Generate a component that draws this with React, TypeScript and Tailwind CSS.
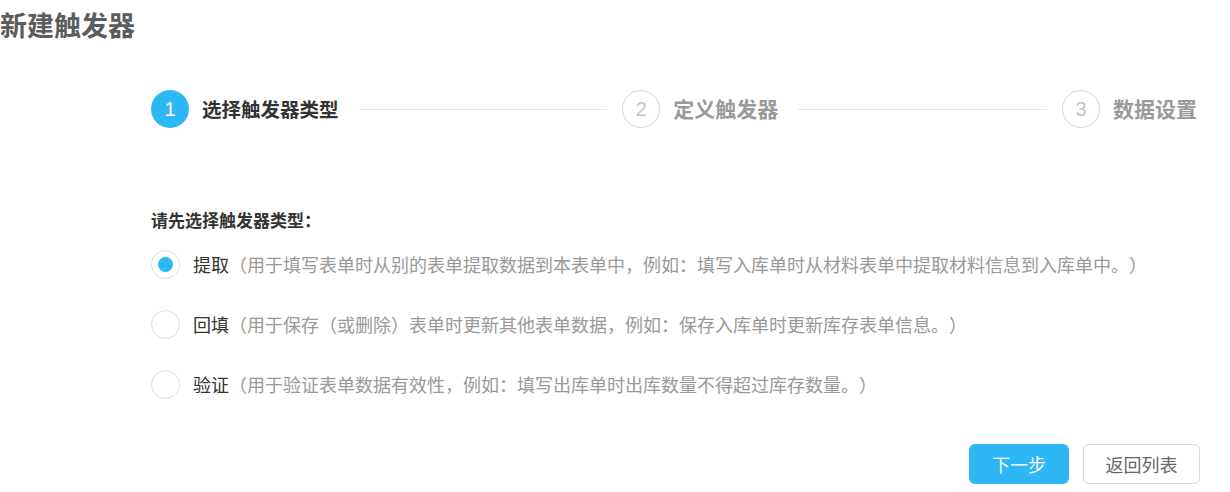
import { Fragment } from "react";

const FONT = "font-['Noto_Sans_CJK_SC','Noto_Sans',sans-serif] [text-spacing-trim:space-all]";

type Step = { n: number; label: string; active?: boolean };

const steps: Step[] = [
  { n: 1, label: "选择触发器类型", active: true },
  { n: 2, label: "定义触发器" },
  { n: 3, label: "数据设置" },
];

const options = [
  {
    name: "提取",
    desc: "（用于填写表单时从别的表单提取数据到本表单中，例如：填写入库单时从材料表单中提取材料信息到入库单中。）",
    checked: true,
  },
  {
    name: "回填",
    desc: "（用于保存（或删除）表单时更新其他表单数据，例如：保存入库单时更新库存表单信息。）",
  },
  {
    name: "验证",
    desc: "（用于验证表单数据有效性，例如：填写出库单时出库数量不得超过库存数量。）",
  },
];

function StepItem({ step }: { step: Step }) {
  return (
    <div className="flex items-center gap-[13px] shrink-0">
      <div
        className={
          step.active
            ? "w-[38px] h-[38px] rounded-full bg-[#2db7f5] text-white flex items-center justify-center text-[20px] font-['Liberation_Sans',sans-serif]"
            : "w-[38px] h-[38px] rounded-full border border-[#d4d4d4] bg-white text-[#c4c4c4] flex items-center justify-center text-[20px] font-['Liberation_Sans',sans-serif]"
        }
      >
        {step.n}
      </div>
      <span
        className={
          step.active
            ? "text-[19.5px] font-bold text-[#333]"
            : "text-[21px] font-bold text-[#999]"
        }
      >
        {step.label}
      </span>
    </div>
  );
}

export default function App() {
  return (
    <div className={`w-[1230px] h-[492px] bg-white overflow-hidden ${FONT}`}>
      <h1 className="pt-[7px] text-[27px] leading-[36px] font-bold text-[#5c5c5c]">新建触发器</h1>

      <div className="mt-[47px] pl-[151px] pr-[33px] flex items-center">
        {steps.map((s, i) => (
          <Fragment key={s.n}>
            <StepItem step={s} />
            {i < steps.length - 1 && <div className="flex-1 h-px bg-[#e6e6e6] ml-[20px] mr-[15px]" />}
          </Fragment>
        ))}
      </div>

      <div className="pl-[151px] pr-[30px]">
        <div className="mt-[80px] text-[17px] leading-[24px] font-bold text-[#333]">请先选择触发器类型：</div>
        <div className="mt-[2px]">
          {options.map((o) => (
            <div key={o.name} className="h-[60px] flex items-center gap-[13px]">
              <span className="w-[29px] h-[29px] rounded-full border border-[#dcdcdc] bg-white flex items-center justify-center shrink-0">
                {o.checked && <span className="w-[15px] h-[15px] rounded-full bg-[#2db7f5]" />}
              </span>
              <span className="text-[18px] leading-[26px] whitespace-nowrap">
                <span className="text-[#333]">{o.name}</span>
                <span className="text-[#999]">{o.desc}</span>
              </span>
            </div>
          ))}
        </div>

        <div className="mt-[30px] flex justify-end gap-[14px]">
          <button className="w-[100px] h-[40px] rounded-[6px] bg-[#2db7f5] text-white text-[18px]">下一步</button>
          <button className="w-[117px] h-[40px] rounded-[6px] border border-[#d9d9d9] bg-white text-[#666] text-[18px]">
            返回列表
          </button>
        </div>
      </div>
    </div>
  );
}
